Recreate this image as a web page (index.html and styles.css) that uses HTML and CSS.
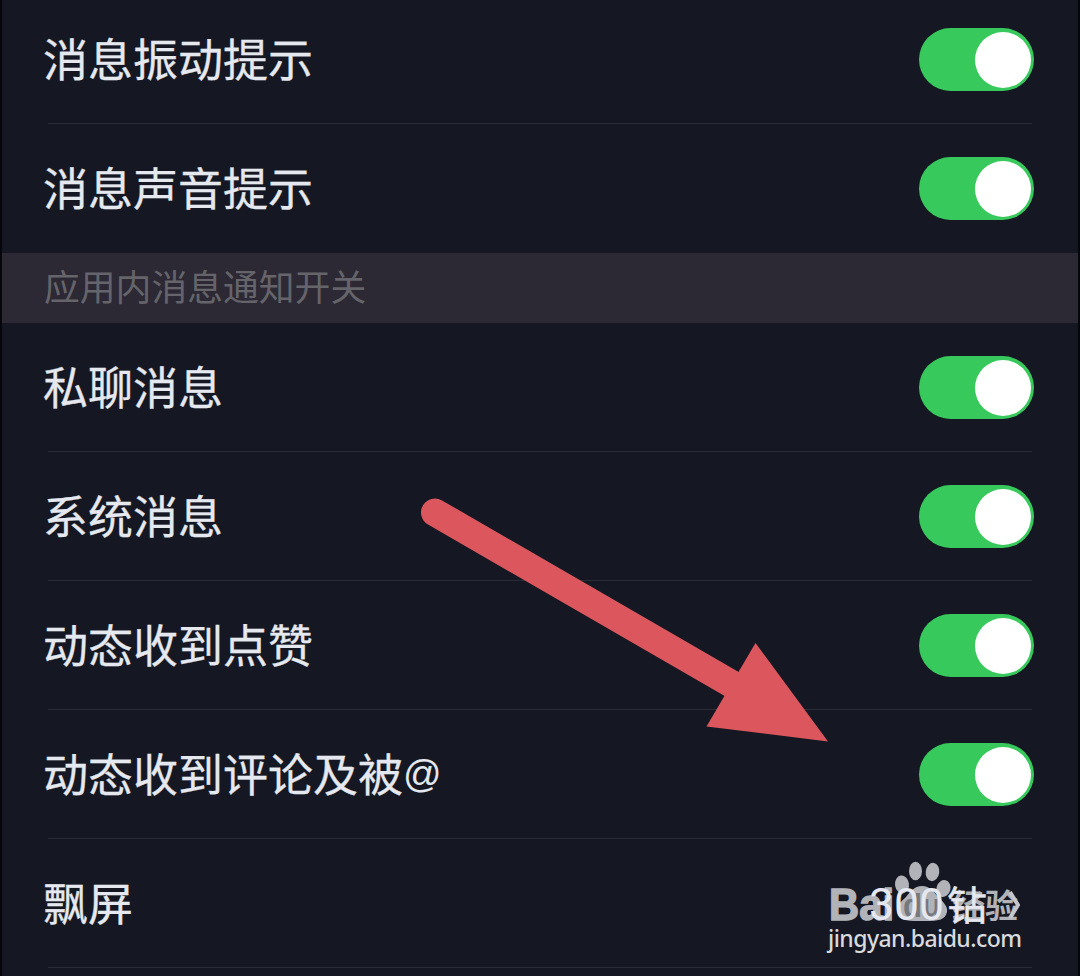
FILE: index.html
```html
<!DOCTYPE html>
<html lang="zh-CN">
  <head>
    <meta charset="UTF-8" />
    <meta name="viewport" content="width=device-width, initial-scale=1.0" />
    <title>消息通知</title>
    <link rel="stylesheet" href="styles.css">
  </head>
  <body>
    <div class="screen">
      <div class="list first">
        <div class="row"><span class="label">消息振动提示</span><div class="switch"></div></div>
        <div class="row last"><span class="label">消息声音提示</span><div class="switch"></div></div>
      </div>
      <div class="section">应用内消息通知开关</div>
      <div class="list">
        <div class="row"><span class="label">私聊消息</span><div class="switch"></div></div>
        <div class="row"><span class="label">系统消息</span><div class="switch"></div></div>
        <div class="row"><span class="label">动态收到点赞</span><div class="switch"></div></div>
        <div class="row"><span class="label">动态收到评论及被<span class="at">@</span></span><div class="switch"></div></div>
        <div class="row">
          <span class="label">飘屏</span>
          <div class="value">
            <span>300<span class="unit">钻</span></span>
            <svg width="14" height="30" viewBox="0 0 14 30"><path d="M4 2l8 13-8 13" /></svg>
          </div>
        </div>
      </div>

      <svg class="arrow" width="410" height="246" viewBox="0 0 410 246">
        <path class="shaft" d="M15 14.500L316 188.500" />
        <path class="head" d="M335.500 145L408 243.500L286.500 228.500Z" />
      </svg>

      <div class="watermark">
        <svg width="200" height="64" viewBox="0 0 200 64">
          <g class="paw">
            <ellipse cx="74" cy="25.500" rx="7" ry="9" transform="rotate(-8 74 25.500)" />
            <ellipse cx="87.500" cy="12" rx="6.500" ry="9.200" />
            <ellipse cx="104.500" cy="13" rx="6.800" ry="9.200" transform="rotate(8 104.500 13)" />
            <ellipse cx="115.500" cy="29.500" rx="7" ry="8.500" transform="rotate(15 115.500 29.500)" />
            <path d="M94 27c8 0 12 6 16 11c5 5 10 9 9 15c-2 10-14 9-25 9s-23 1-25-9c-1-6 4-10 9-15c4-5 8-11 16-11z" />
          </g>
          <text class="logo" x="1" y="61" textLength="65" lengthAdjust="spacingAndGlyphs">Bai</text>
          <text class="du" x="75" y="58" textLength="38" lengthAdjust="spacingAndGlyphs">du</text>
          <text class="cjk" x="124" y="58.500" textLength="66" lengthAdjust="spacingAndGlyphs">经验</text>
        </svg>
        <div class="site">jingyan.baidu.com</div>
      </div>
    </div>
  </body>
</html>
```

FILE: styles.css
```css
body {
  margin: 0;
  background: #151822;
  font-family: "Noto Sans CJK SC", sans-serif;
}
.screen {
  position: relative;
  box-sizing: border-box;
  width: 1080px;
  height: 976px;
  overflow: hidden;
  border: solid #05060b;
  border-width: 0 2px;
  background: #151822;
}
.first {
  margin-top: -5px;
}
.row {
  box-sizing: border-box;
  height: 129px;
  padding: 0 44px 0 41px;
  display: flex;
  align-items: center;
  justify-content: space-between;
  font-size: 45px;
  line-height: 64px;
  color: #e5e8ef;
  background: linear-gradient(#292b35, #292b35) no-repeat 46px 100% / 984px 1px;
}
.row.last {
  background: none;
}
.label {
  padding-bottom: 4px;
  -webkit-text-stroke: 0.3px;
}
.at {
  font-family: "Liberation Sans", sans-serif;
  font-size: 38px;
  line-height: 0;
  vertical-align: 5px;
  -webkit-text-stroke: 0;
}
.section {
  box-sizing: border-box;
  height: 70px;
  padding-left: 42px;
  font-size: 35.8px;
  line-height: 65px;
  color: #65646a;
  background: #2c2934;
}
.switch {
  box-sizing: border-box;
  width: 115px;
  height: 63px;
  padding: 3.5px 3px;
  border-radius: 32px;
  display: flex;
  justify-content: flex-end;
  background: #37c95b;
}
.switch::after {
  content: "";
  width: 56px;
  height: 56px;
  border-radius: 50%;
  background: white;
}
.value {
  position: relative;
  z-index: 1;
  display: flex;
  align-items: center;
  gap: 19px;
  padding-top: 2px;
  padding-right: 14px;
  font-family: Roboto, "Noto Sans CJK SC", sans-serif;
  font-size: 44.5px;
}
.unit {
  padding-left: 3px;
  font-size: 40px;
  line-height: 0;
  -webkit-text-stroke: 0.5px;
}
.value path {
  fill: none;
  stroke: #c4c6cb;
  stroke-width: 4;
}
.arrow {
  position: absolute;
  left: 418px;
  top: 498px;
}
.shaft {
  stroke: #dc565d;
  stroke-width: 28;
  stroke-linecap: round;
}
.head {
  fill: #dc565d;
}
.watermark {
  position: absolute;
  left: 826px;
  top: 859px;
  color: #d9dade;
}
.watermark svg {
  display: block;
  opacity: 0.8;
}
.paw,
.logo,
.cjk {
  fill: #d9dade;
}
.logo,
.du {
  font-family: "Liberation Sans", sans-serif;
  font-weight: bold;
  font-size: 44px;
}
.logo {
  stroke: #d9dade;
  stroke-width: 1.5;
}
.du {
  font-size: 33px;
  fill: #8e9096;
}
.cjk {
  font-weight: bold;
  font-size: 33px;
}
.site {
  font: 500 23px/30px "Noto Sans", sans-serif;
  letter-spacing: -0.55px;
}
```
